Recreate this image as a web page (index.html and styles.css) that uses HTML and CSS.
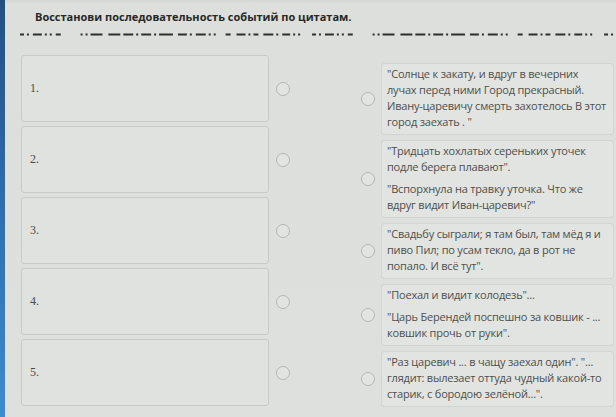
FILE: index.html
```html
<!DOCTYPE html>
<html lang="ru">
<head>
<meta charset="utf-8">
<title>Восстанови последовательность</title>
<link rel="stylesheet" href="styles.css">
</head>
<body>
<div class="screen">
  <div class="edge"></div>
  <div class="content">
    <h1 class="title">Восстанови последовательность событий по цитатам.</h1>
    <svg class="divider" viewBox="0 0 600 3" preserveAspectRatio="none">
      <line x1="0" y1="1.5" x2="600" y2="1.5" stroke="#2e2f2e" stroke-width="2" stroke-dasharray="4 3 2 4 9 3 2 3 2 4 5 20 2 3 2 3 12 6 12 3 10 3 2 3 10 3 2 3 14 5 9 3 2 4 10 3 2 3 2 10 5 6 9 3 2 3 5 5 10 3 2 4 8 3 2 3 2 12"/>
    </svg>
    <div class="board">
      <div class="slots">
        <div class="slot-row"><div class="slot"><span class="num">1.</span></div><span class="radio"></span></div>
        <div class="slot-row"><div class="slot"><span class="num">2.</span></div><span class="radio"></span></div>
        <div class="slot-row"><div class="slot"><span class="num">3.</span></div><span class="radio"></span></div>
        <div class="slot-row"><div class="slot"><span class="num">4.</span></div><span class="radio"></span></div>
        <div class="slot-row"><div class="slot"><span class="num">5.</span></div><span class="radio"></span></div>
      </div>
      <div class="quotes">
        <div class="quote-row"><span class="radio"></span>
          <div class="card"><p>"Солнце к закату, и вдруг в вечерних<br>лучах перед ними Город прекрасный.<br>Ивану-царевичу смерть захотелось В этот<br>город заехать . "</p></div>
        </div>
        <div class="quote-row"><span class="radio"></span>
          <div class="card"><p>"Тридцать хохлатых сереньких уточек<br>подле берега плавают".</p><p>"Вспорхнула на травку уточка. Что же<br>вдруг видит Иван-царевич?"</p></div>
        </div>
        <div class="quote-row"><span class="radio"></span>
          <div class="card"><p>"Свадьбу сыграли; я там был, там мёд я и<br>пиво Пил; по усам текло, да в рот не<br>попало. И всё тут".</p></div>
        </div>
        <div class="quote-row"><span class="radio"></span>
          <div class="card"><p>"Поехал и видит колодезь"...</p><p>"Царь Берендей поспешно за ковшик - ...<br>ковшик прочь от руки".</p></div>
        </div>
        <div class="quote-row"><span class="radio"></span>
          <div class="card"><p>"Раз царевич ... в чащу заехал один". "...<br>глядит: вылезает оттуда чудный какой-то<br>старик, с бородою зелёной...".</p></div>
        </div>
      </div>
    </div>
  </div>
</div>
</body>
</html>
```
FILE: styles.css
```css
html, body {
  margin: 0;
  padding: 0;
}
body {
  width: 616px;
  height: 417px;
  overflow: hidden;
  background: #dcdfdb;
  font-family: "Open Sans", "Noto Sans", sans-serif;
}
.screen {
  display: flex;
  height: 417px;
  background: linear-gradient(180deg, #d3d6d4 0px, #dcdfdb 4px, #dde0dc 100%);
}
.edge {
  width: 5px;
  flex: none;
  background: linear-gradient(180deg, #234f80 0%, #2c68a6 40%, #3d8bd2 100%);
}
.content {
  flex: 1;
  min-width: 0;
  padding: 9px 0 0 15px;
}
.title {
  margin: 0 0 0 15px;
  font-size: 11px;
  line-height: 16px;
  font-weight: 700;
  color: #262826;
}
.divider {
  display: block;
  width: 100%;
  height: 3px;
  margin-top: 8px;
}
.board {
  display: flex;
  margin-top: 19px;
}
.slots {
  display: flex;
  flex-direction: column;
  gap: 4px;
  margin-left: 1px;
  width: 269px;
  flex: none;
}
.slot-row {
  display: flex;
  align-items: center;
  gap: 7px;
}
.slot {
  width: 244px;
  height: 65px;
  border: 1px solid #c8cbc7;
  border-radius: 3px;
  background: #dfe2de;
  display: flex;
  align-items: center;
  padding-left: 8px;
  box-sizing: content-box;
}
.num {
  font-family: "Liberation Serif", "DejaVu Serif", serif;
  font-size: 12px;
  color: #4a4c4a;
}
.radio {
  width: 12px;
  height: 12px;
  border: 1.5px solid #b4b7b3;
  border-radius: 50%;
  flex: none;
  background: #e2e4e1;
}
.quotes {
  display: flex;
  flex-direction: column;
  gap: 5px;
  margin-top: 8px;
  margin-left: 71px;
  flex: 1;
  min-width: 0;
}
.quote-row {
  display: flex;
  align-items: center;
  gap: 6px;
}
.card {
  flex: 1;
  min-width: 0;
  margin-right: 2px;
  background: #e2e4e1;
  border: 1px solid #d2d5d1;
  border-radius: 3px;
  padding: 2px 4px 4px 5px;
}
.card p {
  margin: 0;
  font-size: 11px;
  line-height: 16px;
  letter-spacing: -0.2px;
  color: #4d4f4d;
  white-space: nowrap;
}
.card p + p {
  margin-top: 6px;
}
```
